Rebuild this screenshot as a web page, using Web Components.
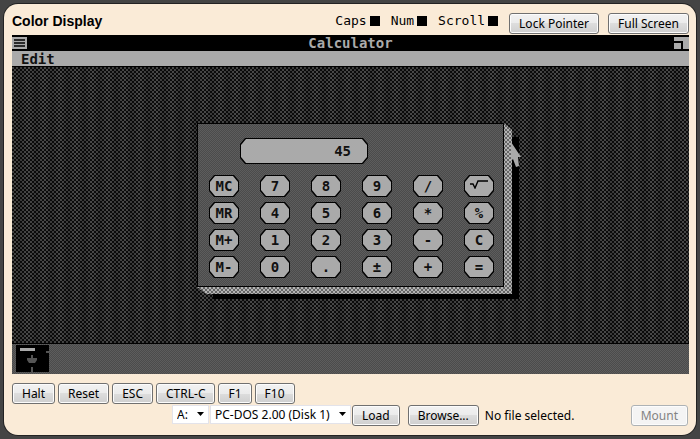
<!DOCTYPE html>
<html lang="en">
<head>
<meta charset="utf-8">
<meta name="viewport" content="width=device-width, initial-scale=1">
<title>Color Display</title>
<style>
	body {
		margin: 0;
		padding: 4px;
		background: #444;
	}
</style>
</head>
<body>
<pc-machine heading="Color Display">
	<pc-leds slot="status"></pc-leds>
	<push-button slot="status">Lock Pointer</push-button>
	<push-button slot="status">Full Screen</push-button>
	<dos-window heading="Calculator" menu="Edit">
		<dos-calculator value="45"></dos-calculator>
	</dos-window>
	<push-button slot="keys">Halt</push-button>
	<push-button slot="keys">Reset</push-button>
	<push-button slot="keys">ESC</push-button>
	<push-button slot="keys">CTRL-C</push-button>
	<push-button slot="keys">F1</push-button>
	<push-button slot="keys">F10</push-button>
	<disk-controls slot="disks"></disk-controls>
</pc-machine>

<script>
"use strict";

(function() {
	// Attach an open shadow root filled from a template string
	function attach(element, html) {
		const template = document.createElement('template');
		template.innerHTML = html;
		const root = element.attachShadow({mode: 'open'});
		root.appendChild(template.content.cloneNode(true));
		return root;
	}

	/*
	The outer panel: heading and status row, the screen, key row, disk row
	*/
	class PcMachine extends HTMLElement {
		constructor() {
			super();
			attach(this, `
			<style>
				:host {
					display: block;
					box-sizing: border-box;
					padding: 7px 7px 8px 8px;
					background: #faebd7;
					border-radius: 14px;
					box-shadow: 0 0 0 1px #222;
					color: #000;
					font: 12px/20px "Noto Sans", sans-serif;
				}
				header {
					display: flex;
					justify-content: space-between;
					height: 24px;
				}
				h1 {
					margin: 0;
					font: bold 14px/20px "Liberation Sans", sans-serif;
				}
				.status {
					display: flex;
					gap: 9px;
					padding-top: 2px;
				}
				.keys {
					display: flex;
					gap: 3px;
					padding-top: 9px;
				}
			</style>
			<header>
				<h1></h1>
				<div class="status"><slot name="status"></slot></div>
			</header>
			<slot></slot>
			<div class="keys"><slot name="keys"></slot></div>
			<slot name="disks"></slot>
			`);
		}

		connectedCallback() {
			this.shadowRoot.querySelector('h1').textContent = this.getAttribute('heading');
		}
	}

	class PushButton extends HTMLElement {
		constructor() {
			super();
			attach(this, `
			<style>
				:host {
					display: block;
				}
				button {
					display: block;
					height: 21px;
					padding: 0 9px;
					border: 1px solid #707070;
					border-radius: 3px;
					background: linear-gradient(#f2f2f2, #ebebeb 50%, #ddd 50%, #cfcfcf);
					box-shadow: inset 0 0 0 1px #fcfcfc;
					color: #000;
					font: 12px/18px "Noto Sans", sans-serif;
					white-space: nowrap;
				}
				button:disabled {
					border-color: #adb2b5;
					background: #f4f4f4;
					color: #838383;
				}
			</style>
			<button type="button"><slot></slot></button>
			`);
		}

		connectedCallback() {
			this.shadowRoot.querySelector('button').disabled = this.hasAttribute('disabled');
		}
	}

	class PcLeds extends HTMLElement {
		constructor() {
			super();
			attach(this, `
			<style>
				:host {
					display: flex;
					gap: 11px;
					margin-right: 2px;
					font: 13px/16px "DejaVu Sans Mono", monospace;
				}
				span {
					display: flex;
					align-items: center;
					gap: 3px;
					height: 16px;
				}
				i {
					width: 10px;
					height: 10px;
					background: #000;
				}
			</style>
			<span>Caps<i></i></span>
			<span>Num<i></i></span>
			<span>Scroll<i></i></span>
			`);
		}
	}

	/*
	Monochrome full screen window: title bar, menu bar, desktop and icon area
	*/
	class DosWindow extends HTMLElement {
		constructor() {
			super();
			attach(this, `
			<style>
				:host {
					display: block;
					color: #111;
					font: bold 14px/16px "DejaVu Sans Mono", monospace;
				}
				.title {
					display: flex;
					justify-content: space-between;
					align-items: center;
					height: 16px;
					background: #000;
					color: #aaa;
				}
				.title svg {
					display: block;
				}
				nav {
					padding-left: 9px;
					height: 15px;
					background: #aaa;
				}
				.desktop {
					display: flex;
					justify-content: center;
					padding: 56px 0;
					border-top: 1px solid #000;
					background:
						repeating-linear-gradient(90deg, rgba(0, 0, 0, 0) 0, rgba(0, 0, 0, .25) 8px, rgba(0, 0, 0, 0) 16px),
						repeating-conic-gradient(#0c0c0c 0 25%, #4a4a4a 0 50%) 0 0 / 4px 4px;
				}
				.icons {
					padding-left: 3px;
					height: 30px;
					border-top: 1px solid #000;
					background: repeating-conic-gradient(#4b4b4b 0 25%, #5d5d5d 0 50%) 0 0 / 2px 2px;
				}
			</style>
			<div class="title">
				<svg width="15" height="14" viewBox="0 0 15 14"><path fill="#aaa" d="M0 1h15v12H0z"/><path stroke="#000" stroke-width="1.3" d="M2 4h11M2 7h11M2 10h11"/></svg>
				<span class="name"></span>
				<svg width="15" height="14" viewBox="0 0 15 14"><path fill="#aaa" d="M0 1h15v12H0z"/><path d="M0 5h9v8H7V7H0z"/></svg>
			</div>
			<nav></nav>
			<div class="desktop"><slot></slot></div>
			<div class="icons">
				<svg width="35" height="28" viewBox="0 0 35 28"><path d="M1 1h33v27H1z"/><path fill="#aaa" d="M5 4h15v3H5z"/><path fill="#555" d="M16 11h2v3h4v2l-2 3h-6l-2-3v-2h4zM16 23h2v5h-2zM31 7h3v2h-3z"/></svg>
			</div>
			`);
		}

		connectedCallback() {
			this.shadowRoot.querySelector('.name').textContent = this.getAttribute('heading');
			this.shadowRoot.querySelector('nav').textContent = this.getAttribute('menu');
		}
	}

	const KEYS = [
		'MC', '7', '8', '9', '/', 'sqrt',
		'MR', '4', '5', '6', '*', '%',
		'M+', '1', '2', '3', '-', 'C',
		'M-', '0', '.', '±', '+', '='
	];
	const SQRT = '<svg width="18" height="10" viewBox="0 0 18 10"><path fill="none" stroke="#000" stroke-width="1.4" d="M0 5h3l2 4 3-7h10"/></svg>';

	class DosCalculator extends HTMLElement {
		constructor() {
			super();
			attach(this, `
			<style>
				:host {
					display: block;
					position: relative;
					z-index: 0;
					box-sizing: border-box;
					width: 307px;
				}
				/* drop shadow and the lit lower right edge */
				.shadow, .edge {
					position: absolute;
					z-index: -1;
				}
				.shadow {
					inset: 14px -15px -12px 16px;
					background: #000;
				}
				.edge {
					inset: 0 -8px -7px 0;
					background: repeating-conic-gradient(#666 0 25%, #b4b4b4 0 50%) 0 0 / 4px 4px;
					clip-path: polygon(0 0, calc(100% - 8px) 0, 100% 7px, 100% 100%, 9px 100%, 0 calc(100% - 7px));
				}
				.body {
					padding: 14px 8px 8px 11px;
					border: 1px solid #000;
					background: repeating-conic-gradient(#4b4b4b 0 25%, #5d5d5d 0 50%) 0 0 / 2px 2px;
				}
				output, button {
					display: block;
					position: relative;
					z-index: 0;
					box-sizing: border-box;
					border: 0;
					background: #000;
					clip-path: polygon(5px 0, calc(100% - 5px) 0, 100% 6px, 100% calc(100% - 6px), calc(100% - 5px) 100%, 5px 100%, 0 calc(100% - 6px), 0 6px);
					color: #111;
					font: bold 14px/22px "DejaVu Sans Mono", monospace;
				}
				output::before, button::before {
					content: "";
					position: absolute;
					z-index: -1;
					inset: 1px;
					background: #aaa;
					clip-path: inherit;
				}
				output {
					width: 128px;
					margin: 0 0 11px 31px;
					padding: 2px 17px 2px 0;
					text-align: right;
				}
				.keys {
					display: grid;
					grid-template-columns: repeat(6, 30px);
					gap: 5px 21px;
				}
				button {
					height: 22px;
					padding: 0;
				}
				button svg {
					display: block;
					margin: 0 auto 4px;
				}
				.pointer {
					position: absolute;
					top: 19px;
					right: -18px;
				}
			</style>
			<div class="shadow"></div>
			<div class="edge"></div>
			<div class="body">
				<output></output>
				<div class="keys">
					${KEYS.map(key => key === 'sqrt'
						? `<button type="button" aria-label="Square root">${SQRT}</button>`
						: `<button type="button">${key}</button>`).join('')}
				</div>
			</div>
			<svg class="pointer" width="12" height="26" viewBox="0 0 12 26"><path fill="#aaa" d="M1 0l10 15H8l1 9-3 1-3-8-2 2z"/></svg>
			`);
		}

		connectedCallback() {
			this.shadowRoot.querySelector('output').textContent = this.getAttribute('value');
		}
	}

	/*
	Drive and disk pickers, plus mounting of a local image
	*/
	class DiskControls extends HTMLElement {
		constructor() {
			super();
			const root = attach(this, `
			<style>
				:host {
					display: flex;
					align-items: flex-start;
					padding: 1px 1px 0 160px;
				}
				.pick {
					display: flex;
					flex: none;
					align-items: center;
					margin-right: 1px;
				}
				select {
					appearance: none;
					box-sizing: border-box;
					height: 19px;
					padding: 0 18px 0 4px;
					border: 1px solid #e3e3ea;
					border-radius: 0;
					background: #fff;
					color: #000;
					font: 12px/17px "Noto Sans", sans-serif;
				}
				.drive select {
					width: 37px;
				}
				.disk select {
					width: 141px;
				}
				.pick svg {
					margin: 0 4px 0 -12px;
					pointer-events: none;
				}
				.browse {
					margin: 0 6px 0 8px;
				}
				.name {
					flex: 1;
					line-height: 22px;
				}
			</style>
			<div class="pick drive">
				<select aria-label="Drive"><option>A:</option><option>B:</option></select>
				<svg width="8" height="5" viewBox="0 0 8 5"><path d="M0 0h7L3.500 4z"/></svg>
			</div>
			<div class="pick disk">
				<select aria-label="Disk"><option>PC-DOS 2.00 (Disk 1)</option><option>PC-DOS 2.00 (Disk 2)</option></select>
				<svg width="8" height="5" viewBox="0 0 8 5"><path d="M0 0h7L3.500 4z"/></svg>
			</div>
			<push-button>Load</push-button>
			<push-button class="browse">Browse...</push-button>
			<input type="file" aria-label="Disk image" hidden>
			<span class="name">No file selected.</span>
			<push-button disabled>Mount</push-button>
			`);
			const file = root.querySelector('input');
			root.querySelector('.browse').addEventListener('click', () => file.click());
			file.addEventListener('change', () => {
				root.querySelector('.name').textContent = file.files.length ? file.files[0].name : 'No file selected.';
			});
		}
	}

	customElements.define('push-button', PushButton);
	customElements.define('pc-leds', PcLeds);
	customElements.define('dos-calculator', DosCalculator);
	customElements.define('dos-window', DosWindow);
	customElements.define('disk-controls', DiskControls);
	customElements.define('pc-machine', PcMachine);
})();
</script>
</body>
</html>
